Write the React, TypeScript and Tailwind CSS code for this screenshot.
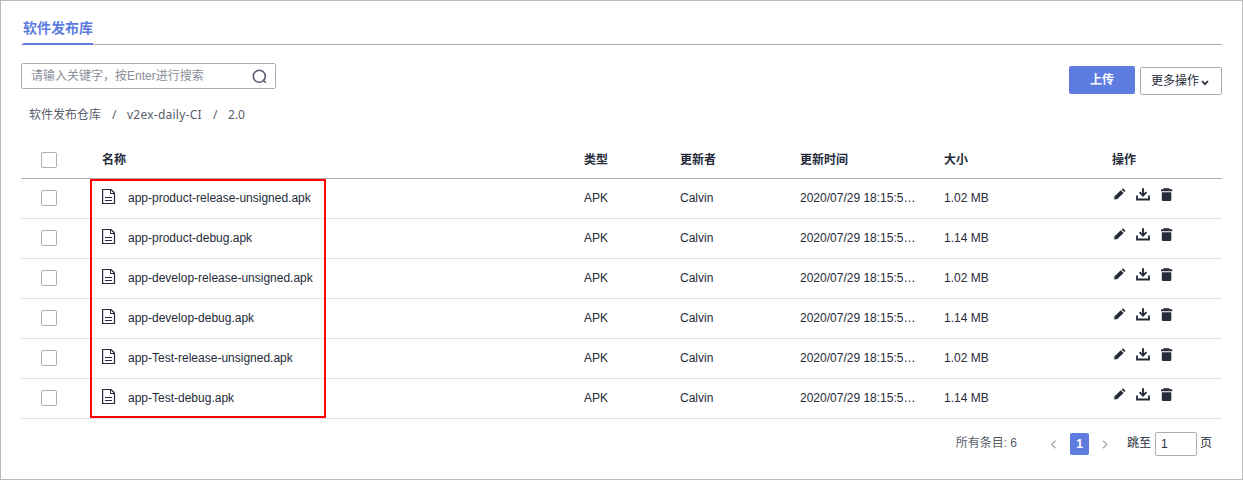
import React from "react";

const files = [
  { name: "app-product-release-unsigned.apk", size: "1.02 MB" },
  { name: "app-product-debug.apk", size: "1.14 MB" },
  { name: "app-develop-release-unsigned.apk", size: "1.02 MB" },
  { name: "app-develop-debug.apk", size: "1.14 MB" },
  { name: "app-Test-release-unsigned.apk", size: "1.02 MB" },
  { name: "app-Test-debug.apk", size: "1.14 MB" },
];

const columns = "grid grid-cols-[81px_482px_96px_120px_144px_168px_110px]";

function Checkbox() {
  return <span className="ml-5 block size-4 rounded-[2px] border border-[#adb0b8] bg-white" />;
}

function FileIcon() {
  return (
    <svg width="14" height="16" viewBox="0 0 14 16" fill="none" stroke="#252b3a" className="shrink-0">
      <path d="M0.6 0.5H9L12.5 4V14.5H0.6Z" strokeWidth="1.2" />
      <path d="M8.5 0.5V4.5H12.5" />
      <path d="M3 8.5H10M3 11.5H10" />
    </svg>
  );
}

function PencilIcon() {
  return (
    <svg width="12" height="12" viewBox="0 0 12 12" fill="#252b3a">
      <path d="M0.2 11.5L0.6 8.2L6.8 2.2L9.6 5L3.4 11Z" />
      <path d="M7.5 1.5L8.4 0.7Q8.9 0.2 9.4 0.7L11 2.3Q11.5 2.8 11 3.3L10.2 4.1Z" />
    </svg>
  );
}

function DownloadIcon() {
  return (
    <svg width="14" height="13" viewBox="0 0 14 13" fill="none" stroke="#252b3a">
      <path d="M1 7.5V11.5H13V7.5" strokeWidth="1.8" />
      <path d="M7 0.3V7" strokeWidth="1.9" />
      <path d="M3.6 4.2L7 7.6L10.4 4.2" strokeWidth="1.9" />
    </svg>
  );
}

function TrashIcon() {
  return (
    <svg width="12" height="13" viewBox="0 0 12 13" fill="#252b3a">
      <path d="M2.5 0.3H8.5V1.3H11.2V3.3H0V1.3H2.5Z" />
      <path d="M0.8 4.3H10.3V11.8Q10.3 13 9.1 13H2Q0.8 13 0.8 11.8Z" />
    </svg>
  );
}

export default function App() {
  return (
    <div className="relative h-[480px] w-[1243px] border border-[#bbbbbb] bg-white pr-5 pl-5 font-['Liberation_Sans','Noto_Sans_CJK_SC',sans-serif] text-xs leading-4 text-[#252b3a]">
      <div className="flex h-11 items-end border-b border-[#a9abb8] pl-0.5">
        <div className="-mb-px flex h-[31px] w-[70px] justify-center border-b-2 border-[#5e7ce0] pt-px text-sm leading-[26px] font-bold whitespace-nowrap text-[#5e7ce0]">
          软件发布库
        </div>
      </div>

      <div className="flex h-[51px] items-start justify-between pt-[18px]">
        <div className="flex h-[26px] w-[255px] items-center justify-between rounded-[2px] border border-[#a9abb8] pr-2 pl-[9px] text-[#8a8e99]">
          <span>请输入关键字，按Enter进行搜索</span>
          <svg width="15" height="15" viewBox="0 0 15 15" fill="none" stroke="#575d6c" strokeWidth="1.6">
            <circle cx="7.3" cy="7.3" r="6" />
            <path d="M10.8 10.8L13.8 13.8" />
          </svg>
        </div>
        <div className="flex gap-[5px] pt-[3px]">
          <button className="h-7 w-[66px] rounded-[2px] bg-[#5e7ce0] font-bold text-white">上传</button>
          <button className="mt-px flex h-7 w-[82px] items-center rounded-[2px] border border-[#a9abb8] pl-2.5">
            更多操作
            <svg width="8" height="6" viewBox="0 0 8 6" fill="none" stroke="#252b3a" strokeWidth="1.7" className="mt-[3px] ml-0.5">
              <path d="M1 1L4 4.2L7 1" />
            </svg>
          </button>
        </div>
      </div>

      <div className="flex h-[37px] pt-[11px] pl-2 font-['Noto_Sans','Noto_Sans_CJK_SC',sans-serif] text-[#575d6c]">
        <span className="w-[83px]">软件发布仓库</span>
        <span className="w-[15px]">/</span>
        <span className="w-[86px] tracking-[0.24px]">v2ex-daily-CI</span>
        <span className="w-[15px]">/</span>
        <span>2.0</span>
      </div>

      <div className="relative">
        <div className={`${columns} mt-1 h-[42px] items-center border-b border-[#a9abb8] pt-[5px] font-bold`}>
          <Checkbox />
          <span>名称</span>
          <span>类型</span>
          <span>更新者</span>
          <span>更新时间</span>
          <span>大小</span>
          <span>操作</span>
        </div>
        {files.map((file) => (
          <div key={file.name} className={`${columns} h-10 items-center border-b border-[#dfe1e6] pb-0.5`}>
            <Checkbox />
            <span className="flex items-center gap-3">
              <span className="-mt-px"><FileIcon /></span>
              <span>{file.name}</span>
            </span>
            <span>APK</span>
            <span>Calvin</span>
            <span>2020/07/29 18:15:5…</span>
            <span>{file.size}</span>
            <span className="-mt-[7px] flex items-center pl-0.5">
              <span className="w-[22px]"><PencilIcon /></span>
              <span className="w-[25px]"><DownloadIcon /></span>
              <TrashIcon />
            </span>
          </div>
        ))}
        <div className="pointer-events-none absolute top-[42px] left-[69px] h-[239px] w-[236px] border-2 border-[#ff0000]" />
      </div>

      <div className="flex items-center justify-end pt-[13px] pr-[10px]">
        <span className="-mt-0.5 mr-[33px] text-[#575d6c]">所有条目: 6</span>
        <svg width="7" height="9" viewBox="0 0 7 9" fill="none" stroke="#adb0b8" strokeWidth="1.6">
          <path d="M5.5 0.8L1.7 4.5L5.5 8.2" />
        </svg>
        <span className="mx-[13px] h-[22px] w-[19px] rounded-[2px] bg-[#5e7ce0] text-center leading-[22px] font-bold text-white">1</span>
        <svg width="6" height="9" viewBox="0 0 6 9" fill="none" stroke="#adb0b8" strokeWidth="1.6">
          <path d="M1 0.8L4.8 4.5L1 8.2" />
        </svg>
        <span className="-mt-0.5 ml-[19px]">跳至</span>
        <span className="mr-[3px] ml-1 h-6 w-[42px] rounded-[2px] border border-[#a9abb8] pl-[5px] leading-[23px]">1</span>
        <span className="-mt-0.5">页</span>
      </div>
    </div>
  );
}
